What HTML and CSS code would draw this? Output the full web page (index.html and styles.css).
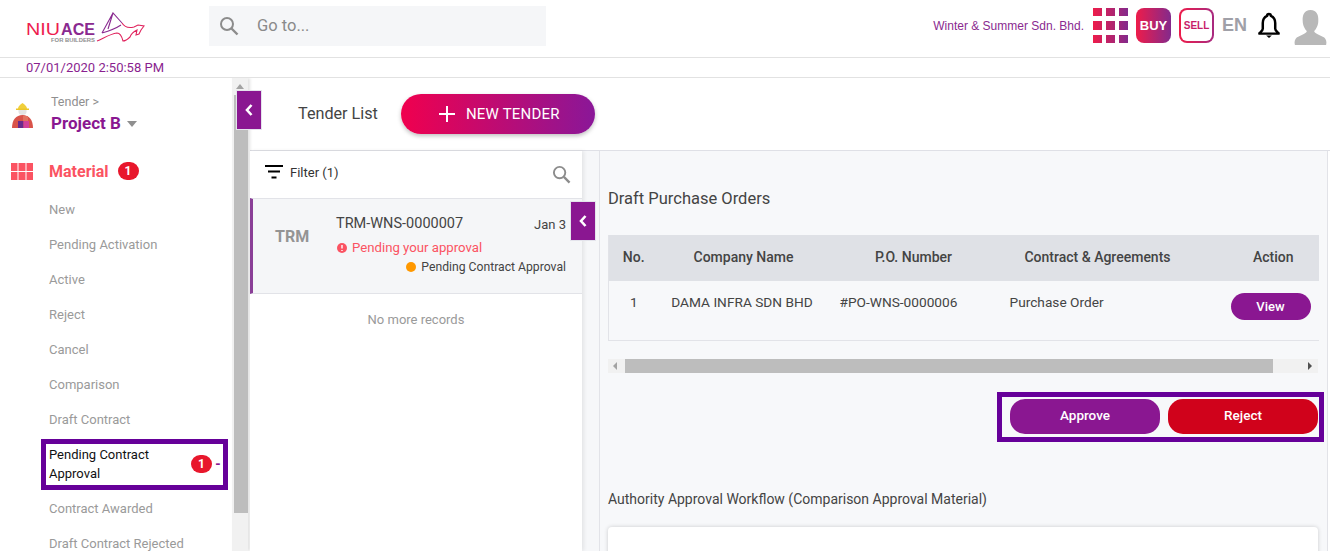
FILE: index.html
```html
<!DOCTYPE html>
<html lang="en">
<head>
<meta charset="utf-8">
<title>Tender List</title>
<link rel="stylesheet" href="styles.css">
</head>
<body>
<svg class="defs" width="0" height="0" aria-hidden="true">
  <defs>
    <linearGradient id="topGrad" x1="0" x2="1" y1="0" y2="0">
      <stop offset="0" stop-color="#ee1c4a"/><stop offset="1" stop-color="#832a8c"/>
    </linearGradient>
  </defs>
</svg>
<header class="header">
  <svg class="logo" width="122" height="34" viewBox="0 0 122 34">
    <text class="logo-niu" x="1" y="22.500" textLength="34" lengthAdjust="spacingAndGlyphs">NIU</text>
    <text class="logo-ace" x="36" y="22.500" textLength="34" lengthAdjust="spacingAndGlyphs">ACE</text>
    <text class="logo-sub" x="26" y="30" textLength="44" lengthAdjust="spacingAndGlyphs">FOR BUILDERS</text>
    <path d="M77 21 L88 1 L97 11 M77 21 C84 19 90 17 96 13 M88 1 L83 17" fill="none" stroke="#8a2a90" stroke-width="1.100"/>
    <path d="M97 11 C100 16 105 16 109 15 L113 13 L119 14 L116 18 L114 22 L111 23 L112 18 C108 20 106 22 105 25 C103 27 101 29 98 29 C97 25 95 21 92 21 C85 22 79 26 72 29" fill="none" stroke="#e0245e" stroke-width="1.100"/>
  </svg>
  <div class="search">
    <svg width="20" height="20" viewBox="0 0 20 20"><circle cx="8" cy="8" r="6" fill="none" stroke="#8c8c8c" stroke-width="2"/><path d="M12.500 12.500 L18.500 18.500" stroke="#8c8c8c" stroke-width="2.400"/></svg>
    <span class="search-text">Go to...</span>
  </div>
  <div class="header-right">
    <span class="company">Winter &amp; Summer Sdn. Bhd.</span>
    <svg class="apps" width="35" height="35" viewBox="0 0 35 35" fill="url(#topGrad)">
      <path d="M0 0h9v8H0zM13 0h9v8h-9zM26 0h9v8h-9zM0 13h9v9H0zM13 13h9v9h-9zM26 13h9v9h-9zM0 27h9v8H0zM13 27h9v8h-9zM26 27h9v8h-9z"/>
    </svg>
    <span class="buy">BUY</span>
    <span class="sell"><span class="sell-in">SELL</span></span>
    <span class="lang">EN</span>
    <svg class="bell" width="22" height="27" viewBox="0 0 23 27"><path d="M11.500 1.500 a2 2 0 0 1 2 2 C17 5 18 8 18 11 V17 C18 19 20 20 21.500 21.500 V22 H1.500 V21.500 C3 20 5 19 5 17 V11 C5 8 6 5 9.500 3.500 a2 2 0 0 1 2 -2Z" fill="#fff" stroke="#000" stroke-width="2.600" stroke-linejoin="round"/><path d="M8.500 24 H14.500 L11.500 26.500Z" fill="#000"/></svg>
    <svg class="avatar" width="33" height="37" viewBox="0 0 36 38"><path d="M18 0 C25 0 27 6 26.500 12 C26.500 17 24 21 22 23 C23 26 29 27 33 30 C35 32 36 35 35 38 H1 C0 35 1 32 3 30 C7 27 13 26 14 23 C12 21 9.500 17 9.500 12 C9 6 11 0 18 0Z" fill="#b8b8b8"/></svg>
  </div>
</header>
<div class="datebar">07/01/2020 2:50:58 PM</div>
<main class="main">
  <aside class="sidebar">
    <div class="project">
      <svg class="worker" width="21" height="27" viewBox="0 0 21 27">
        <path d="M6 6 C6 3 8 2 10.500 0 C13 2 15 3 15 6Z" fill="#f0cf3c"/>
        <path d="M4 5.500 H17 V7 H4Z" fill="#ecc62a"/>
        <path d="M6.500 7 H14.500 V9 C14.500 11 12.500 12 10.500 12 C8.500 12 6.500 11 6.500 9Z" fill="#e4e4e4"/>
        <path d="M0 25 C0 17 4 12 10.500 12 C17 12 21 17 21 25Z" fill="#d9534a"/>
        <path d="M11 13 H16 V18 H11Z" fill="#e2725f"/>
        <path d="M6 18 H11.500 V25 H6Z" fill="#6a2a8c"/>
        <path d="M11.500 18 H17 V25 H11.500Z" fill="#d2409a"/>
      </svg>
      <div class="project-text">
        <div class="crumb">Tender &gt;</div>
        <div class="project-name">Project B <span class="caret"></span></div>
      </div>
    </div>
    <div class="material">
      <svg width="22" height="17" viewBox="0 0 22 17" fill="#fb5362"><path d="M0 0h6.500v8H0zM7.500 0h7v8h-7zM15.500 0H22v8h-6.500zM0 9h6.500v8H0zM7.500 9h7v8h-7zM15.500 9H22v8h-6.500z"/></svg>
      <span class="material-name">Material</span>
      <span class="badge">1</span>
    </div>
    <nav class="nav">
      <a class="nav-item">New</a>
      <a class="nav-item">Pending Activation</a>
      <a class="nav-item">Active</a>
      <a class="nav-item">Reject</a>
      <a class="nav-item">Cancel</a>
      <a class="nav-item">Comparison</a>
      <a class="nav-item">Draft Contract</a>
      <a class="nav-active">
        <span class="nav-active-text">Pending Contract Approval</span>
        <span class="badge">1</span>
        <span class="dash">-</span>
      </a>
      <a class="nav-item nav-after">Contract Awarded</a>
      <a class="nav-item">Draft Contract Rejected</a>
    </nav>
  </aside>
  <div class="vscroll">
    <span class="arrow-up"></span>
    <span class="vthumb"></span>
  </div>
  <button class="toggle toggle-a" aria-label="Collapse"><svg width="10" height="14" viewBox="0 0 10 14"><path d="M7.500 2 L3 7 L7.500 12" fill="none" stroke="#fff" stroke-width="2.600"/></svg></button>
  <section class="content">
    <div class="topbar">
      <h1 class="page-title">Tender List</h1>
      <button class="new-btn">
        <svg width="16" height="16" viewBox="0 0 16 16"><path d="M8 0V16M0 8H16" stroke="#fff" stroke-width="2"/></svg>
        NEW TENDER
      </button>
    </div>
    <div class="panes">
      <div class="list">
        <div class="filter">
          <svg width="18" height="14" viewBox="0 0 18 14"><path d="M0 1H18M3 6.500H15M6.500 12.500H11.500" stroke="#000" stroke-width="2"/></svg>
          <span class="filter-label">Filter (1)</span>
          <svg class="filter-search" width="19" height="19" viewBox="0 0 20 20"><circle cx="8" cy="8" r="6" fill="none" stroke="#8c8c8c" stroke-width="2"/><path d="M12.500 12.500 L18.500 18.500" stroke="#8c8c8c" stroke-width="2.400"/></svg>
        </div>
        <article class="card">
          <div class="card-code">TRM</div>
          <div class="card-body">
            <div class="card-top"><span>TRM-WNS-0000007</span><span class="card-date">Jan 3</span></div>
            <div class="card-alert">
              <svg width="10" height="10" viewBox="0 0 10 10"><circle cx="5" cy="5" r="5" fill="#fb5362"/><path d="M5 2V5.500M5 7V8" stroke="#fff" stroke-width="1.400"/></svg>
              Pending your approval
            </div>
            <div class="card-status"><span class="dot"></span>Pending Contract Approval</div>
          </div>
        </article>
        <div class="no-more">No more records</div>
      </div>
      <button class="toggle toggle-b" aria-label="Collapse"><svg width="10" height="14" viewBox="0 0 10 14"><path d="M7.500 2 L3 7 L7.500 12" fill="none" stroke="#fff" stroke-width="2.600"/></svg></button>
      <div class="gutter"></div>
      <div class="detail">
        <h2 class="detail-title">Draft Purchase Orders</h2>
        <table class="po">
          <thead>
            <tr>
              <th class="c-no">No.</th><th class="c-co">Company Name</th><th class="c-po">P.O. Number</th><th class="c-ct">Contract &amp; Agreements</th><th class="c-ac">Action</th>
            </tr>
          </thead>
          <tbody>
            <tr>
              <td class="c-no">1</td><td class="c-co c-shift">DAMA INFRA SDN BHD</td><td class="c-po c-left">#PO-WNS-0000006</td><td class="c-ct c-left">Purchase Order</td><td class="c-ac"><button class="view">View</button></td>
            </tr>
          </tbody>
        </table>
        <div class="hscroll">
          <span class="arrow-left"></span>
          <span class="hthumb"></span>
          <span class="arrow-right"></span>
        </div>
        <div class="actions-row">
          <div class="actions">
            <button class="act approve">Approve</button>
            <button class="act reject">Reject</button>
          </div>
        </div>
        <h3 class="workflow-title">Authority Approval Workflow (Comparison Approval Material)</h3>
        <div class="workflow-card"></div>
      </div>
    </div>
  </section>
</main>
</body>
</html>
```

FILE: styles.css
```css
* { box-sizing: border-box; }
html, body { margin: 0; padding: 0; height: 551px; overflow: hidden; background: #fff; }
body { font-family: Roboto, "Liberation Sans", sans-serif; color: #444; font-size: 14px; }
button { font-family: inherit; border: 0; cursor: pointer; }
h1, h2, h3 { margin: 0; font-weight: 400; }
.defs { display: block; height: 0; }

.header { height: 58px; border-bottom: 1px solid #e2e2e2; display: flex; align-items: flex-start; }
.logo { margin: 12px 0 0 25px; flex: none; }
.logo-niu { font: 400 16.500px "Liberation Sans", sans-serif; fill: #ee1c4e; }
.logo-ace { font: 700 16.500px "Liberation Sans", sans-serif; fill: #8a2a90; }
.logo-sub { font: 700 4.500px "Liberation Sans", sans-serif; fill: #8f8f8f; }
.search { margin: 6px 0 0 62px; width: 337px; height: 40px; background: #f5f6f8; display: flex; align-items: center; padding-left: 10px; gap: 18px; color: #8a8a8a; font-size: 16.500px; }
.search-text { margin-bottom: 2px; }
.header-right { margin-left: auto; display: flex; align-items: center; height: 51px; padding-right: 3px; }
.company { font-family: "Liberation Sans", sans-serif; font-size: 12px; color: #8a2a90; margin-right: 9px; }
.apps { margin-right: 8px; }
.buy { width: 35px; height: 35px; border-radius: 8px; background: linear-gradient(90deg, #ee1c4a, #832a8c); color: #fff; font: 700 13px/35px "Liberation Sans", sans-serif; text-align: center; margin-right: 8px; }
.sell { width: 35px; height: 35px; border-radius: 8px; background: linear-gradient(90deg, #ee1c4a, #a82a80); padding: 2px; margin-right: 8px; }
.sell-in { display: block; height: 31px; border-radius: 6px; background: #fff; color: #c81e6a; font: 700 10px/31px "Liberation Sans", sans-serif; text-align: center; }
.lang { font: 700 18px "Liberation Sans", sans-serif; color: #a0a0a8; width: 24px; margin-right: 12px; }
.bell { margin-right: 14px; }
.avatar { margin-top: 3px; }

.datebar { height: 20px; border-bottom: 1px solid #e2e2e2; padding-left: 26px; color: #8a1f8f; font-size: 13px; line-height: 19px; }

.main { height: 473px; overflow: hidden; display: flex; position: relative; }
.sidebar { width: 232px; flex: none; background: #fff; overflow: hidden; }
.project { display: flex; align-items: flex-start; padding: 16px 0 0 12px; height: 79px; }
.worker { margin-top: 9px; flex: none; }
.project-text { margin-left: 18px; }
.crumb { font-size: 12.500px; color: #8f8f8f; line-height: 16px; }
.project-name { font-size: 17px; font-weight: 700; color: #8a1791; line-height: 22px; margin-top: 2px; display: flex; align-items: center; gap: 6px; }
.caret { width: 0; height: 0; border: 5px solid transparent; border-top: 6px solid #8f8f8f; border-bottom: 0; margin-top: 2px; }
.material { display: flex; align-items: center; height: 20px; margin-top: 4px; padding-left: 11px; }
.material-name { font-size: 16px; font-weight: 700; color: #fb5362; margin-left: 16px; margin-right: 9px; }
.badge { width: 21px; height: 18px; border-radius: 9px; background: #e8172c; color: #fff; font-size: 12px; font-weight: 700; line-height: 18px; text-align: center; flex: none; }
.nav { display: flex; flex-direction: column; margin-top: 11px; }
.nav-item { height: 35px; padding-left: 49px; font-size: 13px; color: #9a9a9a; line-height: 35px; white-space: nowrap; flex: none; }
.nav-active { width: 187px; height: 51px; margin: 2px 0 0 41px; border: 5px solid #660099; padding: 0 3px 2px 3px; display: flex; align-items: center; color: #111; font-size: 13px; line-height: 19px; flex: none; }
.nav-active-text { width: 142px; flex: none; }
.dash { color: #8a1791; font-weight: 900; margin-left: 3px; }
.nav-after { margin-top: 1px; }

.vscroll { width: 16px; flex: none; background: #f1f1f1; box-shadow: 2px 0 3px rgba(0,0,0,.12); display: flex; flex-direction: column; align-items: center; position: relative; z-index: 1; }
.arrow-up { width: 0; height: 0; border: 4px solid transparent; border-bottom: 5px solid #a3a3a3; border-top: 0; margin-top: 6px; }
.vthumb { width: 14px; height: 418px; background: #bdbdbd; margin-top: 6px; margin-left: 1px; }

.toggle { position: absolute; width: 26px; height: 40px; background: #8a1791; border: 1px solid #e4e4ec; padding: 0; display: flex; align-items: center; justify-content: center; z-index: 3; }
.toggle-a { left: 236px; top: 12px; }
.toggle-b { left: 570px; top: 123px; }

.content { flex: 1; min-width: 0; display: flex; flex-direction: column; margin-left: 2px; }
.topbar { height: 73px; flex: none; border-bottom: 1px solid #dfe0e6; display: flex; align-items: center; padding: 0 0 0 48px; }
.page-title { font-size: 16.200px; color: #444; margin: 0 23px 1px 0; }
.new-btn { width: 194px; height: 40px; border-radius: 20px; background: linear-gradient(90deg, #f0004e, #8a1798); color: #fff; font-size: 15px; letter-spacing: 0.2px; box-shadow: 0 2px 4px rgba(0,0,0,.25); display: flex; align-items: center; padding-left: 38px; gap: 11px; }

.panes { flex: 1; display: flex; min-height: 0; }
.list { width: 332px; flex: none; background: #fff; box-shadow: 2px 0 4px rgba(0,0,0,.08); position: relative; z-index: 1; }
.filter { height: 47px; display: flex; align-items: center; padding: 0 11px 5px 15px; color: #333; font-size: 13px; }
.filter-label { margin-left: 7px; }
.filter-search { margin-left: auto; margin-top: 5px; }
.card { height: 96px; background: #f5f6f8; border-top: 1px solid #e2e3e8; border-bottom: 1px solid #e2e3e8; border-left: 3px solid #8a3f97; display: flex; }
.card-code { width: 83px; flex: none; font-size: 16px; font-weight: 700; color: #949494; padding: 28px 0 0 22px; }
.card-body { flex: 1; padding: 15px 16px 0 0; }
.card-top { display: flex; justify-content: space-between; font-size: 14.500px; color: #444; line-height: 20px; }
.card-date { font-size: 13px; margin-top: 1px; }
.card-alert { display: flex; align-items: center; gap: 5px; color: #fb5362; font-size: 13.200px; line-height: 20px; margin-top: 3px; padding-left: 1px; }
.card-status { display: flex; align-items: center; justify-content: flex-end; font-size: 12.200px; color: #444; line-height: 18px; }
.dot { width: 10px; height: 10px; border-radius: 50%; background: #ff9800; margin-right: 5px; }
.no-more { text-align: center; color: #9a9a9a; font-size: 13px; padding-top: 18px; }

.gutter { width: 18px; flex: none; background: #f6f7f9; border-right: 1px solid #e2e3e8; }
.detail { flex: 1; min-width: 0; background: #f7f8fa; padding: 0 9px 0 8px; border-right: 1px solid #e2e3e8; margin-right: 2px; }
.detail-title { font-size: 16.500px; color: #444; line-height: 20px; padding-top: 38px; height: 84px; }
.po { width: 710px; border-collapse: collapse; table-layout: fixed; font-size: 13.700px; border-bottom: 1px solid #e2e3e8; border-left: 1px solid #e2e3e8; }
.po th { background: #dfe1e6; height: 46px; font-size: 14px; font-weight: 500; color: #444; text-align: center; padding: 0 0 2px; }
.po td { height: 59px; padding: 0 0 16px; color: #444; text-align: center; vertical-align: middle; }
.c-no { width: 50px; }
.c-co { width: 170px; }
.c-po { width: 170px; }
.c-ct { width: 198px; }
.c-ac { width: 122px; }
.po th.c-ac { text-align: right; padding-right: 25px; }
.po td.c-ac { text-align: right; padding: 12px 8px 0 0; vertical-align: top; }
.po td.c-left { text-align: left; padding-left: 11px; }
.po td.c-shift { padding-right: 3px; }
.view { width: 80px; height: 27px; border-radius: 14px; background: #8a1791; color: #fff; font-size: 13px; font-weight: 500; }
.hscroll { height: 14px; margin-top: 18px; background: #f1f1f1; display: flex; align-items: center; }
.arrow-left { width: 0; height: 0; border: 4px solid transparent; border-right: 4px solid #a3a3a3; border-left: 0; margin-left: 5px; }
.hthumb { width: 648px; height: 14px; background: #bdbdbd; margin-left: 8px; }
.arrow-right { width: 0; height: 0; border: 4px solid transparent; border-left: 4px solid #505050; border-right: 0; margin-left: auto; margin-right: 6px; }
.actions-row { display: flex; justify-content: flex-end; margin: 19px -6px 0 0; }
.actions { width: 327px; height: 50px; border: 5px solid #660099; display: flex; gap: 8px; padding: 2px 1px 3px 8px; }
.act { width: 150px; height: 35px; border-radius: 15px; color: #fff; font-size: 13.500px; font-weight: 500; padding: 0 0 3px; }
.approve { background: #8a1791; }
.reject { background: #d0021b; }
.workflow-title { font-size: 14px; color: #444; line-height: 18px; margin-top: 48px; }
.workflow-card { height: 120px; margin-top: 19px; background: #fff; border-radius: 4px; box-shadow: 0 0 4px rgba(0,0,0,.18); }
```
